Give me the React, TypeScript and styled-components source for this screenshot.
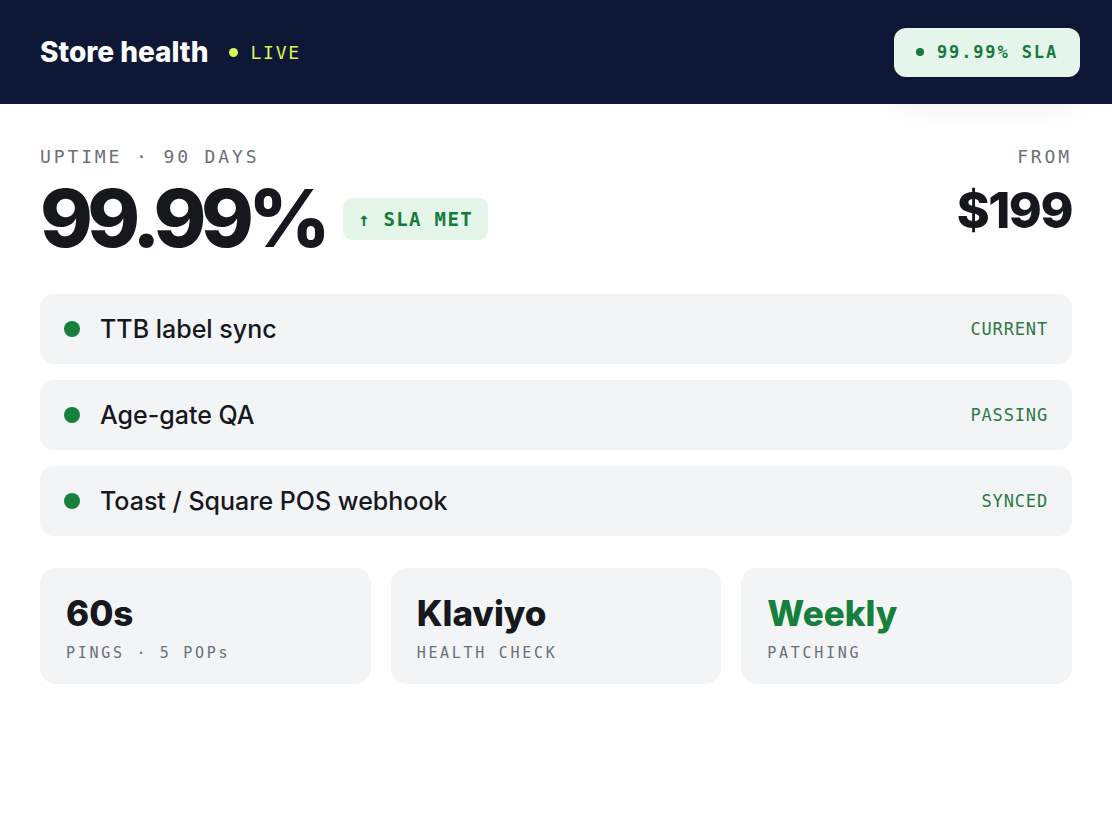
import React from "react";
import styled, { createGlobalStyle } from "styled-components";

const Global = createGlobalStyle`
  html, body { margin: 0; padding: 0; background: #ffffff; }
  body { font-family: Inter, "Noto Sans", sans-serif; color: #16181d; }
`;

const mono = `"DejaVu Sans Mono", "Liberation Mono", monospace`;

const Header = styled.header`
  height: 104px;
  background: #0e1836;
  display: flex;
  align-items: center;
  justify-content: space-between;
  padding: 0 32px 0 40px;
  box-sizing: border-box;
`;

const Brand = styled.div`
  display: flex;
  align-items: center;
  gap: 21px;
`;

const Title = styled.h1`
  margin: 0;
  font-size: 28px;
  font-weight: 800;
  letter-spacing: 0;
  color: #ffffff;
`;

const Live = styled.span`
  display: flex;
  align-items: center;
  gap: 12px;
  font-family: ${mono};
  font-size: 18px;
  font-weight: 400;
  letter-spacing: 0.1em;
  color: #d7f55b;
`;

const Dot = styled.span<{ $size: number; $color: string }>`
  width: ${(p) => p.$size}px;
  height: ${(p) => p.$size}px;
  border-radius: 50%;
  background: ${(p) => p.$color};
  flex: none;
`;

const SlaBadge = styled.div`
  display: flex;
  align-items: center;
  gap: 13px;
  height: 49px;
  padding: 0 22px;
  border-radius: 12px;
  background: #e6f5eb;
  color: #157a3c;
  font-family: ${mono};
  font-weight: 700;
  font-size: 17px;
  letter-spacing: 0.11em;
  box-shadow: 0 24px 40px rgba(14, 24, 54, 0.08);
`;

const Main = styled.main`
  padding: 42px 40px 0;
`;

const Hero = styled.section`
  display: flex;
  justify-content: space-between;
  align-items: flex-start;
`;

const HeroLeft = styled.div`
  display: flex;
  flex-direction: column;
`;

const Eyebrow = styled.div<{ $align?: string }>`
  font-family: ${mono};
  font-size: 18px;
  letter-spacing: 0.16em;
  color: #6b6f78;
  line-height: 22px;
  text-align: ${(p) => p.$align ?? "left"};
`;

const BigRow = styled.div`
  display: flex;
  align-items: center;
  gap: 18px;
  margin-top: 4px;
`;

const BigNum = styled.div`
  font-size: 80px;
  font-weight: 800;
  letter-spacing: -0.07em;
  line-height: 92px;
  color: #16181d;
`;

const MetPill = styled.div`
  display: flex;
  align-items: center;
  height: 42px;
  padding: 0 15px;
  border-radius: 9px;
  background: #e4f5ea;
  color: #157a3c;
  font-family: ${mono};
  font-weight: 700;
  font-size: 19px;
  letter-spacing: 0.07em;
  margin-top: 2px;
`;

const HeroRight = styled.div`
  display: flex;
  flex-direction: column;
  align-items: flex-end;
`;

const Price = styled.div`
  font-size: 50px;
  font-weight: 800;
  letter-spacing: -0.03em;
  line-height: 60px;
  margin-top: 12px;
`;

const Checks = styled.section`
  display: flex;
  flex-direction: column;
  gap: 16px;
  margin-top: 30px;
`;

const CheckRow = styled.div`
  display: flex;
  align-items: center;
  height: 70px;
  padding: 0 24px;
  border-radius: 14px;
  background: #f3f4f6;
  gap: 20px;
`;

const CheckName = styled.span`
  flex: 1;
  font-size: 25px;
  font-weight: 500;
  letter-spacing: 0;
  color: #16181d;
`;

const CheckState = styled.span`
  font-family: ${mono};
  font-size: 17px;
  letter-spacing: 0.05em;
  color: #2b7a46;
`;

const Stats = styled.section`
  display: grid;
  grid-template-columns: repeat(3, 1fr);
  gap: 20px;
  margin-top: 32px;
`;

const StatCard = styled.div`
  height: 116px;
  box-sizing: border-box;
  padding: 24px 26px;
  border-radius: 16px;
  background: #f3f4f6;
`;

const StatValue = styled.div<{ $accent?: boolean }>`
  font-size: 35px;
  font-weight: 800;
  letter-spacing: 0;
  line-height: 42px;
  color: ${(p) => (p.$accent ? "#157f3b" : "#16181d")};
`;

const StatLabel = styled.div`
  margin-top: 10px;
  font-family: ${mono};
  font-size: 15px;
  letter-spacing: 0.18em;
  color: #6b6f78;
`;

const checks = [
  { name: "TTB label sync", state: "CURRENT" },
  { name: "Age-gate QA", state: "PASSING" },
  { name: "Toast / Square POS webhook", state: "SYNCED" },
];

const stats = [
  { value: "60s", label: "PINGS · 5 POPs" },
  { value: "Klaviyo", label: "HEALTH CHECK" },
  { value: "Weekly", label: "PATCHING", accent: true },
];

export default function App() {
  return (
    <>
      <Global />
      <Header>
        <Brand>
          <Title>Store health</Title>
          <Live>
            <Dot $size={9} $color="#d7f55b" />
            LIVE
          </Live>
        </Brand>
        <SlaBadge>
          <Dot $size={8} $color="#157a3c" />
          99.99% SLA
        </SlaBadge>
      </Header>
      <Main>
        <Hero>
          <HeroLeft>
            <Eyebrow>UPTIME · 90 DAYS</Eyebrow>
            <BigRow>
              <BigNum>99.99%</BigNum>
              <MetPill>↑ SLA MET</MetPill>
            </BigRow>
          </HeroLeft>
          <HeroRight>
            <Eyebrow $align="right">FROM</Eyebrow>
            <Price>$199</Price>
          </HeroRight>
        </Hero>
        <Checks>
          {checks.map((c) => (
            <CheckRow key={c.name}>
              <Dot $size={16} $color="#157f3b" />
              <CheckName>{c.name}</CheckName>
              <CheckState>{c.state}</CheckState>
            </CheckRow>
          ))}
        </Checks>
        <Stats>
          {stats.map((s) => (
            <StatCard key={s.label}>
              <StatValue $accent={s.accent}>{s.value}</StatValue>
              <StatLabel>{s.label}</StatLabel>
            </StatCard>
          ))}
        </Stats>
      </Main>
    </>
  );
}
